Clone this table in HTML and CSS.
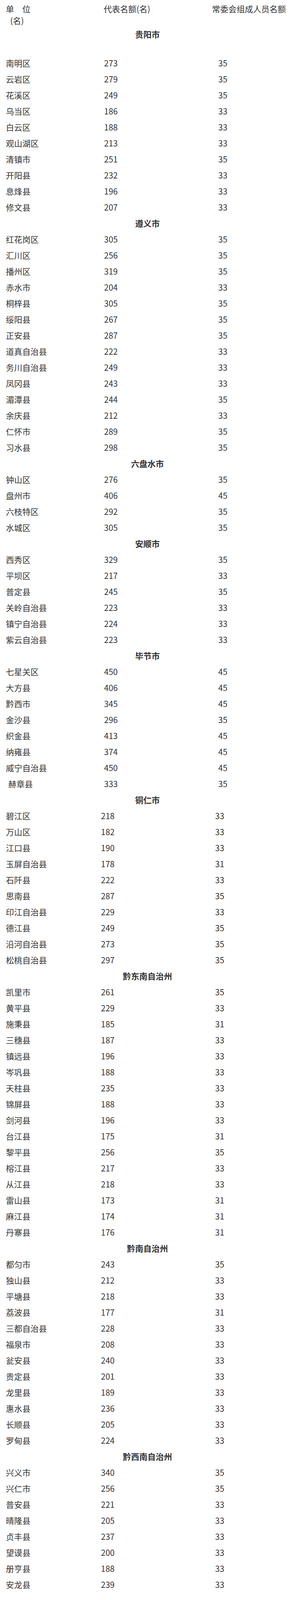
FILE: index.html
```html
<!DOCTYPE html>
<html lang="zh-CN">
<head>
<meta charset="utf-8">
<title>代表名额</title>
<link rel="stylesheet" href="styles.css">
</head>
<body>
<div class="page">
  <div class="head">
    <div class="head-unit"><span class="unit-line">单　位</span><span class="unit-sub">(名)</span></div>
    <div class="head-col">代表名额(名)</div>
    <div class="head-col">常委会组成人员名额</div>
  </div>

  <section class="group a">
    <div class="title first">贵阳市</div>
    <div class="row"><span>南明区</span><span>273</span><span>35</span></div>
    <div class="row"><span>云岩区</span><span>279</span><span>35</span></div>
    <div class="row"><span>花溪区</span><span>249</span><span>35</span></div>
    <div class="row"><span>乌当区</span><span>186</span><span>33</span></div>
    <div class="row"><span>白云区</span><span>188</span><span>33</span></div>
    <div class="row"><span>观山湖区</span><span>213</span><span>33</span></div>
    <div class="row"><span>清镇市</span><span>251</span><span>35</span></div>
    <div class="row"><span>开阳县</span><span>232</span><span>33</span></div>
    <div class="row"><span>息烽县</span><span>196</span><span>33</span></div>
    <div class="row"><span>修文县</span><span>207</span><span>33</span></div>
  </section>

  <section class="group a">
    <div class="title">遵义市</div>
    <div class="row"><span>红花岗区</span><span>305</span><span>35</span></div>
    <div class="row"><span>汇川区</span><span>256</span><span>35</span></div>
    <div class="row"><span>播州区</span><span>319</span><span>35</span></div>
    <div class="row"><span>赤水市</span><span>204</span><span>33</span></div>
    <div class="row"><span>桐梓县</span><span>305</span><span>35</span></div>
    <div class="row"><span>绥阳县</span><span>267</span><span>35</span></div>
    <div class="row"><span>正安县</span><span>287</span><span>35</span></div>
    <div class="row"><span>道真自治县</span><span>222</span><span>33</span></div>
    <div class="row"><span>务川自治县</span><span>249</span><span>33</span></div>
    <div class="row"><span>凤冈县</span><span>243</span><span>33</span></div>
    <div class="row"><span>湄潭县</span><span>244</span><span>35</span></div>
    <div class="row"><span>余庆县</span><span>212</span><span>33</span></div>
    <div class="row"><span>仁怀市</span><span>289</span><span>35</span></div>
    <div class="row"><span>习水县</span><span>298</span><span>35</span></div>
  </section>

  <section class="group a">
    <div class="title">六盘水市</div>
    <div class="row"><span>钟山区</span><span>276</span><span>35</span></div>
    <div class="row"><span>盘州市</span><span>406</span><span>45</span></div>
    <div class="row"><span>六枝特区</span><span>292</span><span>35</span></div>
    <div class="row"><span>水城区</span><span>305</span><span>35</span></div>
  </section>

  <section class="group a">
    <div class="title">安顺市</div>
    <div class="row"><span>西秀区</span><span>329</span><span>35</span></div>
    <div class="row"><span>平坝区</span><span>217</span><span>33</span></div>
    <div class="row"><span>普定县</span><span>245</span><span>35</span></div>
    <div class="row"><span>关岭自治县</span><span>223</span><span>33</span></div>
    <div class="row"><span>镇宁自治县</span><span>224</span><span>33</span></div>
    <div class="row"><span>紫云自治县</span><span>223</span><span>33</span></div>
  </section>

  <section class="group a">
    <div class="title">毕节市</div>
    <div class="row"><span>七星关区</span><span>450</span><span>45</span></div>
    <div class="row"><span>大方县</span><span>406</span><span>45</span></div>
    <div class="row"><span>黔西市</span><span>345</span><span>45</span></div>
    <div class="row"><span>金沙县</span><span>296</span><span>35</span></div>
    <div class="row"><span>织金县</span><span>413</span><span>45</span></div>
    <div class="row"><span>纳雍县</span><span>374</span><span>45</span></div>
    <div class="row"><span>威宁自治县</span><span>450</span><span>45</span></div>
    <div class="row"><span class="indent">赫章县</span><span>333</span><span>35</span></div>
  </section>

  <section class="group b">
    <div class="title">铜仁市</div>
    <div class="row"><span>碧江区</span><span>218</span><span>33</span></div>
    <div class="row"><span>万山区</span><span>182</span><span>33</span></div>
    <div class="row"><span>江口县</span><span>190</span><span>33</span></div>
    <div class="row"><span>玉屏自治县</span><span>178</span><span>31</span></div>
    <div class="row"><span>石阡县</span><span>222</span><span>33</span></div>
    <div class="row"><span>思南县</span><span>287</span><span>35</span></div>
    <div class="row"><span>印江自治县</span><span>229</span><span>33</span></div>
    <div class="row"><span>德江县</span><span>249</span><span>35</span></div>
    <div class="row"><span>沿河自治县</span><span>273</span><span>35</span></div>
    <div class="row"><span>松桃自治县</span><span>297</span><span>35</span></div>
  </section>

  <section class="group b">
    <div class="title">黔东南自治州</div>
    <div class="row"><span>凯里市</span><span>261</span><span>35</span></div>
    <div class="row"><span>黄平县</span><span>229</span><span>33</span></div>
    <div class="row"><span>施秉县</span><span>185</span><span>31</span></div>
    <div class="row"><span>三穗县</span><span>187</span><span>33</span></div>
    <div class="row"><span>镇远县</span><span>196</span><span>33</span></div>
    <div class="row"><span>岑巩县</span><span>188</span><span>33</span></div>
    <div class="row"><span>天柱县</span><span>235</span><span>33</span></div>
    <div class="row"><span>锦屏县</span><span>188</span><span>33</span></div>
    <div class="row"><span>剑河县</span><span>196</span><span>33</span></div>
    <div class="row"><span>台江县</span><span>175</span><span>31</span></div>
    <div class="row"><span>黎平县</span><span>256</span><span>35</span></div>
    <div class="row"><span>榕江县</span><span>217</span><span>33</span></div>
    <div class="row"><span>从江县</span><span>218</span><span>33</span></div>
    <div class="row"><span>雷山县</span><span>173</span><span>31</span></div>
    <div class="row"><span>麻江县</span><span>174</span><span>31</span></div>
    <div class="row"><span>丹寨县</span><span>176</span><span>31</span></div>
  </section>

  <section class="group b">
    <div class="title">黔南自治州</div>
    <div class="row"><span>都匀市</span><span>243</span><span>35</span></div>
    <div class="row"><span>独山县</span><span>212</span><span>33</span></div>
    <div class="row"><span>平塘县</span><span>218</span><span>33</span></div>
    <div class="row"><span>荔波县</span><span>177</span><span>31</span></div>
    <div class="row"><span>三都自治县</span><span>228</span><span>33</span></div>
    <div class="row"><span>福泉市</span><span>208</span><span>33</span></div>
    <div class="row"><span>瓮安县</span><span>240</span><span>33</span></div>
    <div class="row"><span>贵定县</span><span>201</span><span>33</span></div>
    <div class="row"><span>龙里县</span><span>189</span><span>33</span></div>
    <div class="row"><span>惠水县</span><span>236</span><span>33</span></div>
    <div class="row"><span>长顺县</span><span>205</span><span>33</span></div>
    <div class="row"><span>罗甸县</span><span>224</span><span>33</span></div>
  </section>

  <section class="group b">
    <div class="title">黔西南自治州</div>
    <div class="row"><span>兴义市</span><span>340</span><span>35</span></div>
    <div class="row"><span>兴仁市</span><span>256</span><span>35</span></div>
    <div class="row"><span>普安县</span><span>221</span><span>33</span></div>
    <div class="row"><span>晴隆县</span><span>205</span><span>33</span></div>
    <div class="row"><span>贞丰县</span><span>237</span><span>33</span></div>
    <div class="row"><span>望谟县</span><span>200</span><span>33</span></div>
    <div class="row"><span>册亨县</span><span>188</span><span>33</span></div>
    <div class="row"><span>安龙县</span><span>239</span><span>33</span></div>
  </section>
</div>
</body>
</html>
```

FILE: styles.css
```css
html, body {
  margin: 0;
  padding: 0;
  background: #ffffff;
}

body {
  font-family: "Noto Sans CJK SC", "Noto Sans", sans-serif;
  font-size: 21px;
  color: #333333;
}

.page {
  width: 744px;
  padding: 7px 0 10px;
  box-sizing: border-box;
}

.head {
  display: grid;
  grid-template-columns: 250px 277px 1fr;
  padding-left: 15px;
  line-height: 30px;
}

.head-unit {
  display: flex;
  flex-direction: column;
}

.unit-sub {
  padding-left: 11px;
}

.head-col {
  white-space: nowrap;
}

.title {
  height: 41.01px;
  line-height: 41px;
  text-align: center;
  padding-left: 10px;
  font-weight: 700;
}

.title.first {
  margin-top: 0;
  margin-bottom: 33px;
}

.row {
  display: grid;
  height: 41.01px;
  line-height: 41px;
  padding-left: 15px;
  white-space: nowrap;
}

.group.a .row {
  grid-template-columns: 251px 292px 1fr;
}

.group.b .row {
  grid-template-columns: 243px 292px 1fr;
}

.indent {
  padding-left: 6px;
}
```
